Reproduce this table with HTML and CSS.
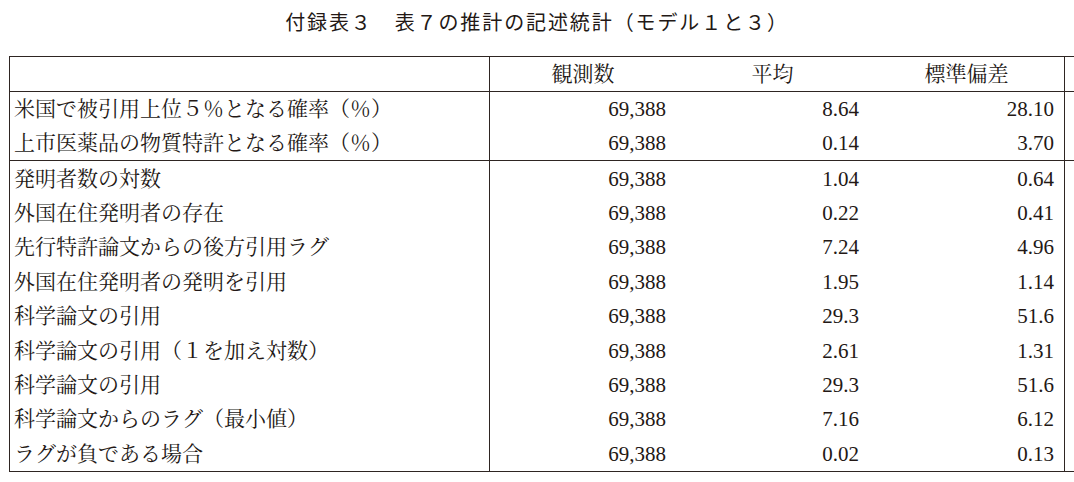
FILE: index.html
```html
<!DOCTYPE html>
<html lang="ja">
<head>
<meta charset="utf-8">
<title>付録表３</title>
<link rel="stylesheet" href="styles.css">
</head>
<body>
<h1 class="title">付録表３　表７の推計の記述統計（モデル１と３）</h1>
<div class="frame">
<table class="stats">
  <colgroup>
    <col class="c-label">
    <col class="c-n">
    <col class="c-mean">
    <col class="c-sd">
  </colgroup>
  <thead>
    <tr class="head">
      <th class="label"></th>
      <th>観測数</th>
      <th>平均</th>
      <th>標準偏差</th>
    </tr>
  </thead>
  <tbody>
    <tr><td class="label">米国で被引用上位５％となる確率（％）</td><td>69,388</td><td>8.64</td><td>28.10</td></tr>
    <tr class="group-end"><td class="label">上市医薬品の物質特許となる確率（％）</td><td>69,388</td><td>0.14</td><td>3.70</td></tr>
    <tr><td class="label">発明者数の対数</td><td>69,388</td><td>1.04</td><td>0.64</td></tr>
    <tr><td class="label">外国在住発明者の存在</td><td>69,388</td><td>0.22</td><td>0.41</td></tr>
    <tr><td class="label">先行特許論文からの後方引用ラグ</td><td>69,388</td><td>7.24</td><td>4.96</td></tr>
    <tr><td class="label">外国在住発明者の発明を引用</td><td>69,388</td><td>1.95</td><td>1.14</td></tr>
    <tr><td class="label">科学論文の引用</td><td>69,388</td><td>29.3</td><td>51.6</td></tr>
    <tr><td class="label">科学論文の引用（１を加え対数）</td><td>69,388</td><td>2.61</td><td>1.31</td></tr>
    <tr><td class="label">科学論文の引用</td><td>69,388</td><td>29.3</td><td>51.6</td></tr>
    <tr><td class="label">科学論文からのラグ（最小値）</td><td>69,388</td><td>7.16</td><td>6.12</td></tr>
    <tr><td class="label">ラグが負である場合</td><td>69,388</td><td>0.02</td><td>0.13</td></tr>
  </tbody>
</table>
</div>
</body>
</html>
```

FILE: styles.css
```css
html, body {
  margin: 0;
  padding: 0;
  background: #ffffff;
}

body {
  color: #231815;
  width: 1074px;
}

.title {
  margin: 0;
  height: 56px;
  line-height: 44px;
  text-align: center;
  font-family: "Noto Sans CJK JP", sans-serif;
  font-weight: normal;
  font-size: 20px;
  letter-spacing: 1.9px;
  color: #231815;
}

/* the horizontal rules run on past the right frame to the page edge, as in the print */
.frame {
  padding-left: 9px;
  width: 1065px;
  background-image:
    linear-gradient(#2e2522, #2e2522),
    linear-gradient(#2e2522, #2e2522),
    linear-gradient(#2e2522, #2e2522),
    linear-gradient(#2e2522, #2e2522);
  background-size: 9px 1px;
  background-repeat: no-repeat;
  background-position:
    right 0 top 0,
    right 0 top 35px,
    right 0 top 104px,
    right 0 bottom 0;
}

.stats {
  border-collapse: separate;
  border-spacing: 0;
  table-layout: fixed;
  width: 1056px;
  border: 1px solid #2e2522;
  background: #ffffff;
  font-family: "Liberation Serif", "Noto Serif CJK JP", "Noto Sans CJK JP", serif;
  font-size: 21px;
  color: #231815;
}

.c-label { width: 480px; }
.c-n { width: 186px; }
.c-mean { width: 193px; }
.c-sd { width: 195px; }

.stats th,
.stats td {
  box-sizing: border-box;
  padding: 0 10px 0 0;
  height: 34.4px;
  line-height: 34px;
  font-weight: normal;
  text-align: right;
  white-space: nowrap;
  vertical-align: middle;
}

.stats th {
  text-align: center;
  padding: 0;
  height: 35px;
}

.stats .label {
  text-align: left;
  padding: 0 0 0 4px;
  border-right: 1px solid #2e2522;
}

.head th {
  border-bottom: 1px solid #2e2522;
}

.group-end td {
  border-bottom: 1px solid #2e2522;
}
```
